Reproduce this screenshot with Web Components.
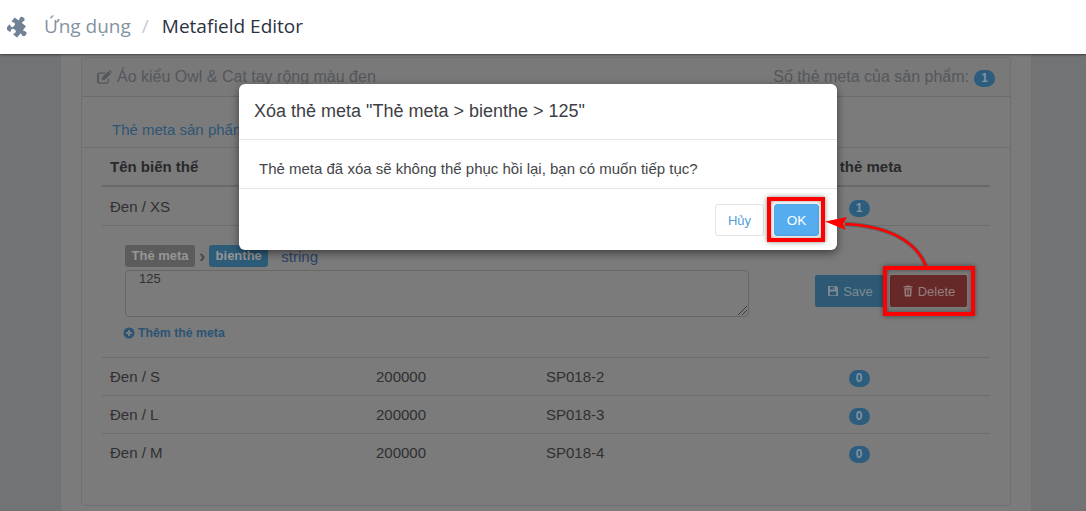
<!DOCTYPE html>
<html lang="vi">
<head>
<meta charset="utf-8">
<title>Metafield Editor</title>
<style>
  html, body { margin: 0; height: 511px; overflow: hidden; }
  body { background: #717375; font: 15px "Liberation Sans", Arial, sans-serif; color: #2f3032; position: relative; }
</style>
</head>
<body>
<app-bar></app-bar>
<page-body>
  <product-panel title-text="Áo kiểu Owl &amp; Cat tay rộng màu đen" count="1">
    <variant-row name="Đen / XS" count="1" open></variant-row>
    <variant-row name="Đen / S" price="200000" sku="SP018-2" count="0"></variant-row>
    <variant-row name="Đen / L" price="200000" sku="SP018-3" count="0"></variant-row>
    <variant-row name="Đen / M" price="200000" sku="SP018-4" count="0"></variant-row>
  </product-panel>
</page-body>
<confirm-dialog heading='Xóa thẻ meta "Thẻ meta &gt; bienthe &gt; 125"'>Thẻ meta đã xóa sẽ không thể phục hồi lại, bạn có muốn tiếp tục?</confirm-dialog>
<step-marks></step-marks>

<script>
const ICONS = {
  puzzle: '<g transform="rotate(38 12 12)"><path d="M3 7h4.500c1 0 1-1 .5-1.700C7.200 4 7.200 1.500 10.300 1.500S13.400 4 12.600 5.300c-.5.7-.5 1.700.5 1.700H18v4.500c0 1 1 1 1.700.5 1.300-.8 3.800-.8 3.800 2.300s-2.500 3.100-3.800 2.300c-.7-.5-1.700-.5-1.700.5V22h-4.500c-1 0-1-1-.5-1.700.8-1.300.8-3.300-2.300-3.300s-3.100 2-2.300 3.300c.5.7.5 1.700-.5 1.700H3v-5c0-1 1-1 1.700-.5 1.300.8 3.300.8 3.300-2.300S6 11.200 4.700 12C4 12.500 3 12.500 3 11.500z"/></g>',
  edit: '<path d="M4 4h10l-2 2H4.500A1.500 1.500 0 0 0 3 7.500v11A1.500 1.500 0 0 0 4.500 20h11a1.500 1.500 0 0 0 1.500-1.500V15l2-2v5.500a3.500 3.500 0 0 1-3.500 3.500h-12A3.500 3.500 0 0 1 0 18.500v-11A3.500 3.500 0 0 1 3.500 4z"/><path d="M8 12 18 2l4 4-10 10H8zM19.500.5a1 1 0 0 1 1.400 0l2.600 2.600a1 1 0 0 1 0 1.400L23 5l-4-4z"/>',
  save: '<path fill-rule="evenodd" d="M2 2h17l3 3v17H2zM6 3.500V9h10V3.500zM12.500 4.500h2.200v3.500h-2.200zM5.500 13v7.500h13V13z"/>',
  trash: '<path fill-rule="evenodd" d="M8.500 2.500 9.500 1h5l1 1.500H21v2.500H3V2.500zM4.500 6.500h15L18.500 22a1 1 0 0 1-1 1h-11a1 1 0 0 1-1-1zM8 9v11h1.800V9zM11.100 9v11h1.800V9zM14.200 9v11H16V9z"/>',
  plus: '<path fill-rule="evenodd" d="M12 1a11 11 0 1 1 0 22 11 11 0 0 1 0-22zM10 6v4H6v4h4v4h4v-4h4v-4h-4V6z"/>'
};

class UiIcon extends HTMLElement {
  connectedCallback() {
    const size = this.getAttribute('size') || 14;
    this.attachShadow({ mode: 'open' });
    this.shadowRoot.innerHTML = `
      <style>
        :host { display: inline-flex; flex: none; }
        svg { display: block; fill: currentColor; }
      </style>
      <svg width="${size}" height="${size}" viewBox="0 0 24 24">${ICONS[this.getAttribute('name')]}</svg>`;
  }
}

class CountBadge extends HTMLElement {
  connectedCallback() {
    this.attachShadow({ mode: 'open' });
    this.shadowRoot.innerHTML = `
      <style>
        :host {
          display: inline-block; min-width: 7px; padding: 3px 7px; border-radius: 10px;
          background: #2c5c7e; color: #84939f; font-size: 12px; font-weight: bold; line-height: 11px; text-align: center;
        }
      </style><slot></slot>`;
  }
}

class AppBar extends HTMLElement {
  connectedCallback() {
    this.attachShadow({ mode: 'open' });
    this.shadowRoot.innerHTML = `
      <style>
        :host {
          display: flex; align-items: center; height: 54px; padding: 0 0 2px 7px; box-sizing: border-box;
          background: #fff; box-shadow: 0 1px 2px rgba(0,0,0,.45); position: relative; z-index: 2;
          font: 19px "Open Sans", sans-serif;
        }
        ui-icon { color: #6f8296; margin-right: 14px; }
        .root { color: #84939f; }
        .sep { color: #c9cdd1; margin: 0 13px 0 11px; }
        .here { color: #2b3240; }
      </style>
      <ui-icon name="puzzle" size="23"></ui-icon>
      <span class="root">Ứng dụng</span><span class="sep">/</span><span class="here">Metafield Editor</span>`;
  }
}

class PageBody extends HTMLElement {
  connectedCallback() {
    this.attachShadow({ mode: 'open' });
    this.shadowRoot.innerHTML = `
      <style>
        :host { display: block; width: 930px; height: 454px; margin: 0 55px 0 61px; padding: 3px 20px 0; overflow: hidden; background: #7b7b7b; }
      </style><slot></slot>`;
  }
}

class ProductPanel extends HTMLElement {
  connectedCallback() {
    this.attachShadow({ mode: 'open' });
    this.shadowRoot.innerHTML = `
      <style>
        :host { display: block; height: 449px; box-sizing: border-box; border: 1px solid #6e7070; border-radius: 4px; }
        .head {
          display: flex; justify-content: space-between; align-items: center; height: 38px; padding: 0 15px;
          border-bottom: 1px solid #696d6f; background: #797979; color: #54575c; font-size: 16px; border-radius: 3px 3px 0 0;
        }
        .head span { display: inline-flex; align-items: center; gap: 5px; }
        .head count-badge { margin-top: 2px; }
        .tabs { height: 51px; box-sizing: border-box; padding: 25px 0 0 30px; border-bottom: 1px solid #6c6e70; color: #2e5574; font-size: 15px; line-height: 16px; }
        .list { padding: 0 20px; }
        .cols { display: grid; grid-template-columns: 266px 170px 190px 262px; height: 37px; align-items: center; border-bottom: 2px solid #686a6a; font-weight: bold; color: #28292b; }
        .cols div { padding-left: 8px; }
        .cols .n { padding: 0; text-align: center; }
      </style>
      <div class="head">
        <span><ui-icon name="edit" size="15"></ui-icon>${this.getAttribute('title-text').replace('&', '&amp;')}</span>
        <span>Số thẻ meta của sản phẩm: <count-badge>${this.getAttribute('count')}</count-badge></span>
      </div>
      <div class="tabs">Thẻ meta sản phẩm</div>
      <div class="list">
        <div class="cols"><div>Tên biến thể</div><div></div><div></div><div class="n">Số thẻ meta</div></div>
        <slot></slot>
      </div>`;
  }
}

class VariantRow extends HTMLElement {
  connectedCallback() {
    const a = n => this.getAttribute(n) || '';
    this.attachShadow({ mode: 'open' });
    this.shadowRoot.innerHTML = `
      <style>
        :host { display: block; border-bottom: 1px solid #6c6e6e; }
        :host(:last-child) { border-bottom: 0; }
        .cells { display: grid; grid-template-columns: 266px 170px 190px 262px; height: 37px; align-items: center; color: #2f3032; }
        :host([open]) .cells { height: 38px; }
        .cells div { padding-left: 8px; }
        .cells .n { padding: 2px 0 0; text-align: center; }
      </style>
      <div class="cells"><div>${a('name')}</div><div>${a('price')}</div><div>${a('sku')}</div><div class="n"><count-badge>${a('count')}</count-badge></div></div>
      ${this.hasAttribute('open') ? '<meta-editor></meta-editor>' : ''}`;
  }
}

class MetaEditor extends HTMLElement {
  connectedCallback() {
    this.attachShadow({ mode: 'open' });
    this.shadowRoot.innerHTML = `
      <style>
        :host { display: flex; height: 132px; box-sizing: border-box; border-top: 1px solid #6c6e6e; padding: 19px 15px 0 23px; }
        .form { width: 624px; margin-right: 66px; flex: none; }
        .tags { display: flex; align-items: center; height: 22px; margin-bottom: 3px; font-size: 13px; font-weight: bold; }
        .tag { padding: 0 6.500px; line-height: 22px; border-radius: 3px; color: #969696; }
        .gray { background: #5c5c5c; }
        .blue { background: #2c5c78; margin-right: 13px; }
        .arrow { width: 14px; text-align: center; color: #484a4c; font-size: 19px; line-height: 18px; }
        .type { color: #2b4468; font-size: 15px; font-weight: normal; }
        .area { position: relative; height: 44px; border: 1px solid #676767; border-radius: 4px; padding: 1px 0 0 13px; color: #33302f; font-size: 13px; line-height: 14px; }
        .grip { position: absolute; right: 1px; bottom: 1px; }
        .add { display: flex; align-items: center; gap: 3px; margin: 9px 0 0 -2px; color: #2c5474; font-size: 12.3px; font-weight: bold; line-height: 14px; }
        .btns { display: flex; gap: 5px; margin-top: 30px; height: 32px; }
        .btn { display: flex; align-items: center; justify-content: center; gap: 4px; height: 32px; border-radius: 2px; font-size: 13px; color: #7f8a92; }
        .save { width: 70px; background: #2d5974; }
        .del { width: 77px; background: #672828; color: #94807f; }
      </style>
      <div class="form">
        <div class="tags"><span class="tag gray">Thẻ meta</span><span class="arrow">›</span><span class="tag blue">bienthe</span><span class="type">string</span></div>
        <div class="area">125
          <svg class="grip" width="9" height="9" viewBox="0 0 9 9"><path d="M0 9 9 0M4 9l5-5" stroke="#3c3c3c" fill="none"/></svg>
        </div>
        <div class="add"><ui-icon name="plus" size="12"></ui-icon>Thêm thẻ meta</div>
      </div>
      <div class="btns">
        <div class="btn save"><ui-icon name="save" size="12"></ui-icon>Save</div>
        <div class="btn del"><ui-icon name="trash" size="12"></ui-icon>Delete</div>
      </div>`;
  }
}

class ConfirmDialog extends HTMLElement {
  connectedCallback() {
    this.attachShadow({ mode: 'open' });
    this.shadowRoot.innerHTML = `
      <style>
        :host {
          display: block; position: absolute; left: 239px; top: 84px; width: 598px; height: 166px; z-index: 3;
          background: #fff; border-radius: 6px; box-shadow: 0 3px 9px rgba(0,0,0,.5); color: #333;
        }
        h4 { margin: 0; height: 56px; box-sizing: border-box; padding-left: 15px; border-bottom: 1px solid #e5e5e5; font-size: 18px; font-weight: normal; line-height: 54px; color: #3d4045; }
        .body { height: 49px; box-sizing: border-box; padding: 0 20px; border-bottom: 1px solid #e5e5e5; font-size: 15px; line-height: 58px; color: #44464a; }
        .foot { display: flex; justify-content: flex-end; gap: 10px; padding: 15px 18px 0 0; }
        button { height: 32px; border-radius: 3px; font: 13px "Liberation Sans", sans-serif; padding: 0; }
        .no { width: 49px; background: #fff; border: 1px solid #e3e3e3; color: #4f9fdc; }
        .ok { width: 45px; background: #55acee; border: 1px solid #55acee; color: #fff; font-size: 13.500px; }
      </style>
      <h4>${this.getAttribute('heading').replace(/>/g, '&gt;')}</h4>
      <div class="body"><slot></slot></div>
      <div class="foot"><button class="no">Hủy</button><button class="ok">OK</button></div>`;
  }
}

// red boxes and the arrow drawn on top of the screenshot
class StepMarks extends HTMLElement {
  connectedCallback() {
    this.attachShadow({ mode: 'open' });
    this.shadowRoot.innerHTML = `
      <style>
        :host { display: block; position: absolute; inset: 0; z-index: 4; pointer-events: none; }
        .frame { position: absolute; box-sizing: border-box; border: 4px solid #f00; box-shadow: 0 0 5px rgba(0,0,0,.45), inset 0 0 4px rgba(0,0,0,.4); }
        svg { position: absolute; left: 0; top: 0; }
      </style>
      <div class="frame" style="left:767px;top:197px;width:58px;height:45px"></div>
      <div class="frame" style="left:883px;top:266px;width:92px;height:50px"></div>
      <svg width="1086" height="511" viewBox="0 0 1086 511">
        <g fill="none" stroke="rgba(0,0,0,.2)" stroke-width="4.500"><path d="M926 266C916 241 888 226 845 224"/></g>
        <path d="M926 266C916 241 888 226 845 224" fill="none" stroke="#f00" stroke-width="2.500"/>
        <path d="M825 221.500 847 217 843 224 846 230z" fill="#f00"/>
      </svg>`;
  }
}

customElements.define('ui-icon', UiIcon);
customElements.define('count-badge', CountBadge);
customElements.define('app-bar', AppBar);
customElements.define('page-body', PageBody);
customElements.define('product-panel', ProductPanel);
customElements.define('variant-row', VariantRow);
customElements.define('meta-editor', MetaEditor);
customElements.define('confirm-dialog', ConfirmDialog);
customElements.define('step-marks', StepMarks);
</script>
</body>
</html>
